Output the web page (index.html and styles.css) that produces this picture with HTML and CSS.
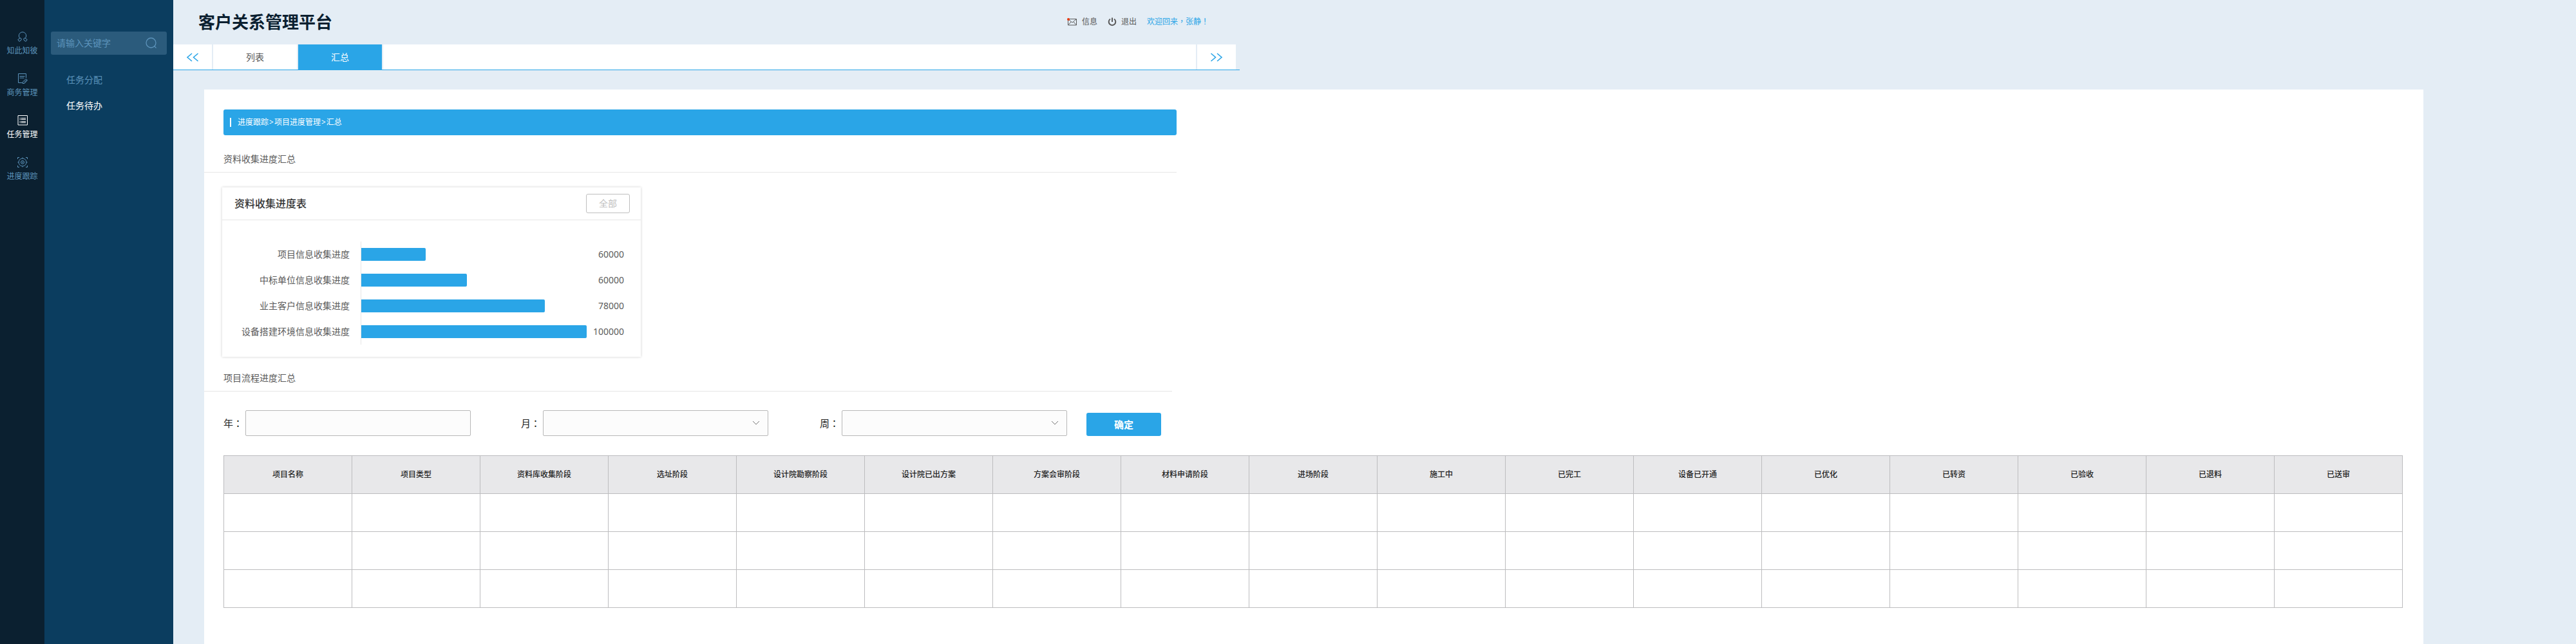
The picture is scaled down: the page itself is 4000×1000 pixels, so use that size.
FILE: index.html
```html
<!DOCTYPE html>
<html lang="zh-CN">
<head>
<meta charset="utf-8">
<title>客户关系管理平台</title>
<link rel="stylesheet" href="styles.css">
</head>
<body>
<div class="app">
  <nav class="rail" aria-label="主导航">
    <a class="rail-item" href="#">
      <svg class="rail-icon" viewBox="0 0 16 16"><path d="M4.500 11a5.700 5.700 0 1 1 7 0M4.500 10 .8 12.500l2 2.800 2.400-1.300 1.300-2.500zM11.500 10l3.700 2.500-2 2.800-2.400-1.300-1.300-2.500z"/></svg>
      <span>知此知彼</span>
    </a>
    <a class="rail-item" href="#">
      <svg class="rail-icon" viewBox="0 0 16 16"><path d="M13.500 7V.5h-12v14h6M3.500 4.500h8M3.500 7h7M8 15.500l.5-2.500 5-4.500 2 2-4.500 5zM10.500 14l4-4"/></svg>
      <span>商务管理</span>
    </a>
    <a class="rail-item is-active" href="#">
      <svg class="rail-icon" viewBox="0 0 16 16"><path d="M1 .5h14.500v14.500H1zM3.500 4.500h1.200M3.500 6.500h1.200M3.500 9.500h1.200M3.500 11.500h1.200M5.500 4.500h7.500M5.500 6.500h7.500M5.500 9.500h7.500M5.500 11.500h7.500"/></svg>
      <span>任务管理</span>
    </a>
    <a class="rail-item" href="#">
      <svg class="rail-icon" viewBox="0 0 16 16"><circle cx="8" cy="8" r="6"/><circle cx="8" cy="8" r="2.500"/><circle cx="8" cy="8" r=".5"/><path d="M.5 3V.5H3M13 .5h2.500V3M15.500 13v2.500H13M3 15.500H.5V13M8 .5V2M8 14v1.500M.5 8H2M14 8h1.500"/></svg>
      <span>进度跟踪</span>
    </a>
  </nav>

  <aside class="side">
    <form class="search">
      <input class="search-input" type="text" placeholder="请输入关键字" aria-label="请输入关键字">
      <button class="search-btn" type="button" aria-label="搜索">
        <svg viewBox="0 0 18 18"><circle cx="8.500" cy="8.500" r="7.500"/><path d="m13.500 13.500 3 3"/></svg>
      </button>
    </form>
    <a class="side-link" href="#">任务分配</a>
    <a class="side-link is-active" href="#">任务待办</a>
  </aside>

  <div class="main">
    <header class="top">
      <h1 class="brand">客户关系管理平台</h1>
      <div class="user">
        <a class="user-link" href="#">
          <svg class="mail" viewBox="0 0 16 12"><path d="M1.500 1.500h13v9.500h-13zM2 2l6 5 6-5M2 10.500l4-4.500M14 10.500 10 6"/><circle cx="2" cy="2" r="2"/></svg>
          信息
        </a>
        <a class="user-link" href="#">
          <svg class="power" viewBox="0 0 14 14"><path d="M4 2.500a5.300 5.300 0 1 0 6 0M7 .5v6.500"/></svg>
          退出
        </a>
        <span class="welcome">欢迎回来<span class="punct" lang="zh-TW">，</span>张静<span class="punct" lang="zh-TW">！</span></span>
      </div>
    </header>

    <nav class="tabs" aria-label="页签">
      <button class="tab-arrow" type="button" aria-label="向左"><svg viewBox="0 0 20 14"><path d="M9 1 2 7l7 6M18.500 1l-7 6 7 6"/></svg></button>
      <a class="tab" href="#">列表</a>
      <a class="tab is-active" href="#">汇总</a>
      <span class="tab-fill"></span>
      <button class="tab-arrow" type="button" aria-label="向右"><svg viewBox="0 0 20 14"><path d="m1.500 1 7 6-7 6M11 1l7 6-7 6"/></svg></button>
    </nav>

    <main class="panel">
      <div class="crumbs"><span>进度跟踪</span><i>&gt;</i><span>项目进度管理</span><i>&gt;</i><span>汇总</span></div>

      <h2 class="section">资料收集进度汇总</h2>

      <section class="card">
        <div class="card-head">
          <h3 class="card-title">资料收集进度表</h3>
          <button class="all-btn" type="button">全部</button>
        </div>
        <div class="chart">
          <div class="chart-row"><span class="chart-label">项目信息收集进度</span><span class="track"><span class="bar" style="width:100px"></span></span><span class="value">60000</span></div>
          <div class="chart-row"><span class="chart-label">中标单位信息收集进度</span><span class="track"><span class="bar" style="width:164px"></span></span><span class="value">60000</span></div>
          <div class="chart-row"><span class="chart-label">业主客户信息收集进度</span><span class="track"><span class="bar" style="width:285px"></span></span><span class="value">78000</span></div>
          <div class="chart-row"><span class="chart-label">设备搭建环境信息收集进度</span><span class="track"><span class="bar" style="width:350px"></span></span><span class="value">100000</span></div>
        </div>
      </section>

      <h2 class="section">项目流程进度汇总</h2>

      <form class="filters">
        <label class="field-label" for="year">年<span class="punct" lang="zh-TW">：</span></label>
        <input class="field" id="year" type="text">
        <label class="field-label" for="month">月<span class="punct" lang="zh-TW">：</span></label>
        <select class="field" id="month"><option></option></select>
        <label class="field-label" for="week">周<span class="punct" lang="zh-TW">：</span></label>
        <select class="field" id="week"><option></option></select>
        <button class="submit" type="button">确定</button>
      </form>

      <table class="grid">
        <thead>
          <tr><th>项目名称</th><th>项目类型</th><th>资料库收集阶段</th><th>选址阶段</th><th>设计院勘察阶段</th><th>设计院已出方案</th><th>方案会审阶段</th><th>材料申请阶段</th><th>进场阶段</th><th>施工中</th><th>已完工</th><th>设备已开通</th><th>已优化</th><th>已转资</th><th>已验收</th><th>已退料</th><th>已送审</th></tr>
        </thead>
        <tbody>
          <tr><td></td><td></td><td></td><td></td><td></td><td></td><td></td><td></td><td></td><td></td><td></td><td></td><td></td><td></td><td></td><td></td><td></td></tr>
          <tr><td></td><td></td><td></td><td></td><td></td><td></td><td></td><td></td><td></td><td></td><td></td><td></td><td></td><td></td><td></td><td></td><td></td></tr>
          <tr><td></td><td></td><td></td><td></td><td></td><td></td><td></td><td></td><td></td><td></td><td></td><td></td><td></td><td></td><td></td><td></td><td></td></tr>
        </tbody>
      </table>
    </main>
  </div>
</div>
</body>
</html>
```
FILE: styles.css
```css
* { box-sizing: border-box; }

body {
  margin: 0;
  background: #e4edf5;
  color: #5a5a5a;
  font: 14px/20px "Noto Sans", "Noto Sans CJK SC", sans-serif;
}

a { color: inherit; text-decoration: none; }
button, input, select { font: inherit; }
button { padding: 0; border: 0; cursor: pointer; }
h1, h2, h3 { margin: 0; }
svg { display: block; fill: none; stroke: currentColor; }

/* full-width punctuation centred in its square */
.punct { font-family: "Noto Sans CJK TC", sans-serif; line-height: 1; }

.app { display: flex; min-height: 100vh; }

/* icon rail */
.rail {
  flex: none;
  width: 69px;
  padding-top: 49px;
  display: flex;
  flex-direction: column;
  gap: 25px;
  background: #0b2030;
  color: #5c93bb;
  font-size: 12px;
}
.rail-item {
  display: flex;
  flex-direction: column;
  align-items: center;
  gap: 4px;
}
.rail-icon { width: 16px; height: 16px; }
.rail-item.is-active { color: #fff; }

/* secondary menu */
.side {
  flex: none;
  width: 200px;
  padding: 49px 10px 0;
  display: flex;
  flex-direction: column;
  gap: 20px;
  background: #0b3d5f;
  color: #5c93bb;
}
.search {
  display: flex;
  align-items: center;
  height: 36px;
  margin-bottom: 9px;
  padding: 0 15px 0 9px;
  border-radius: 3px;
  background: #2b5b7c;
}
.search-input {
  flex: 1;
  min-width: 0;
  padding: 0;
  border: 0;
  outline: 0;
  background: none;
  color: inherit;
}
.search-input::placeholder { color: #5c93bb; opacity: 1; }
.search-btn { background: none; color: inherit; }
.search-btn svg { width: 18px; height: 18px; stroke-width: 1.3; }
.side-link { padding-left: 24px; }
.side-link.is-active { color: #fff; }

.main {
  flex: 1;
  min-width: 0;
  display: flex;
  flex-direction: column;
}

/* top bar */
.top {
  display: flex;
  align-items: center;
  justify-content: space-between;
  max-width: 1656px;
  height: 69px;
  padding: 0 48px 2px 39px;
}
.brand { color: #0b2030; font-size: 26px; line-height: 36px; }
.user { display: flex; align-items: center; gap: 16px; font-size: 12px; }
.user-link { display: flex; align-items: center; gap: 7px; }
.mail { width: 16px; height: 12px; }
.mail circle { fill: #e8380d; stroke: none; }
.power { width: 14px; height: 14px; stroke-width: 2; }
.welcome { color: #2aa5e7; }

/* tabs */
.tabs {
  display: flex;
  gap: 2px;
  max-width: 1656px;
  height: 40px;
  padding-right: 6px;
  border-bottom: 1px solid #2aa5e7;
}
.tab, .tab-arrow {
  display: flex;
  align-items: center;
  justify-content: center;
  background: #fff;
}
.tab { width: 130px; }
.tab.is-active { background: #2aa5e7; color: #fff; }
.tab-arrow { width: 60px; color: #2aa5e7; }
.tab-arrow svg { width: 20px; height: 14px; stroke-width: 1.6; }
.tab-fill { flex: 1; background: #fff; }

/* content panel */
.panel {
  flex: 1;
  max-width: 3446px;
  margin: 30px 0 0 48px;
  padding: 31px 32px 40px 30px;
  background: #fff;
}
.crumbs {
  display: flex;
  align-items: center;
  max-width: 1480px;
  height: 40px;
  padding-left: 10px;
  border-radius: 3px;
  background: #2aa5e7;
  color: #fff;
  font-size: 12px;
}
.crumbs::before {
  content: "";
  width: 2px;
  height: 14px;
  margin-right: 10px;
  background: #fff;
}
.crumbs i { padding: 0 1px; font-style: normal; }

.section {
  max-width: 1510px;
  margin-left: -30px;
  padding: 27px 0 10px 30px;
  border-bottom: 1px solid #e6e6e6;
  font-size: 14px;
  font-weight: 400;
}

/* progress card */
.card {
  max-width: 650px;
  margin: 23px 0 0 -2px;
  background: #fff;
  box-shadow: 0 0 4px rgba(0, 0, 0, .2);
}
.card-head {
  display: flex;
  align-items: center;
  justify-content: space-between;
  height: 51px;
  padding: 0 17px 0 19px;
  border-bottom: 1px solid #e6e6e6;
}
.card-title { color: #333; font-size: 16px; font-weight: 500; }
.all-btn {
  width: 68px;
  height: 30px;
  border: 1px solid #bfbfbf;
  border-radius: 3px;
  background: #fff;
  color: #bfbfbf;
}
.chart { padding: 33px 26px 19px 0; }
.chart-row { display: flex; align-items: center; height: 40px; }
.chart-label { width: 198px; text-align: right; }
.track {
  flex: 1;
  display: flex;
  align-items: center;
  align-self: stretch;
  margin-left: 17px;
  border-left: 1px solid #e6e6e6;
}
.bar {
  height: 20px;
  border-radius: 0 2px 2px 0;
  background: #2aa5e7;
}
.value { width: 58px; text-align: right; }

.card + .section { max-width: 1503px; padding-top: 23px; }

/* filters */
.filters {
  display: flex;
  align-items: center;
  margin: 29px 0 30px;
}
.field-label { width: 34px; color: #222; font-size: 15px; white-space: nowrap; }
.field {
  width: 350px;
  height: 40px;
  margin-right: 78px;
  padding: 0 10px;
  border: 1px solid #b8b8b8;
  border-radius: 2px;
  background: #fcfcfc;
}
select.field {
  margin-right: 80px;
  appearance: none;
  background: #fcfcfc url("data:image/svg+xml,%3Csvg xmlns='http://www.w3.org/2000/svg' width='12' height='8' fill='none' stroke='%23777'%3E%3Cpath d='m1 1 5 5 5-5'/%3E%3C/svg%3E") no-repeat right 12px center;
}
.submit {
  align-self: flex-end;
  width: 116px;
  height: 36px;
  border-radius: 3px;
  background: #2aa5e7;
  color: #fff;
  font-size: 15px;
  font-weight: 700;
}
.filters #week { margin-right: 30px; }

/* stage table */
.grid {
  width: 100%;
  border-collapse: collapse;
  table-layout: fixed;
}
.grid th, .grid td {
  height: 59px;
  padding: 0;
  border: 1px solid #bdbdbf;
  text-align: center;
}
.grid th {
  background: #e8e8ea;
  color: #222;
  font-size: 12px;
  font-weight: 500;
}
```
